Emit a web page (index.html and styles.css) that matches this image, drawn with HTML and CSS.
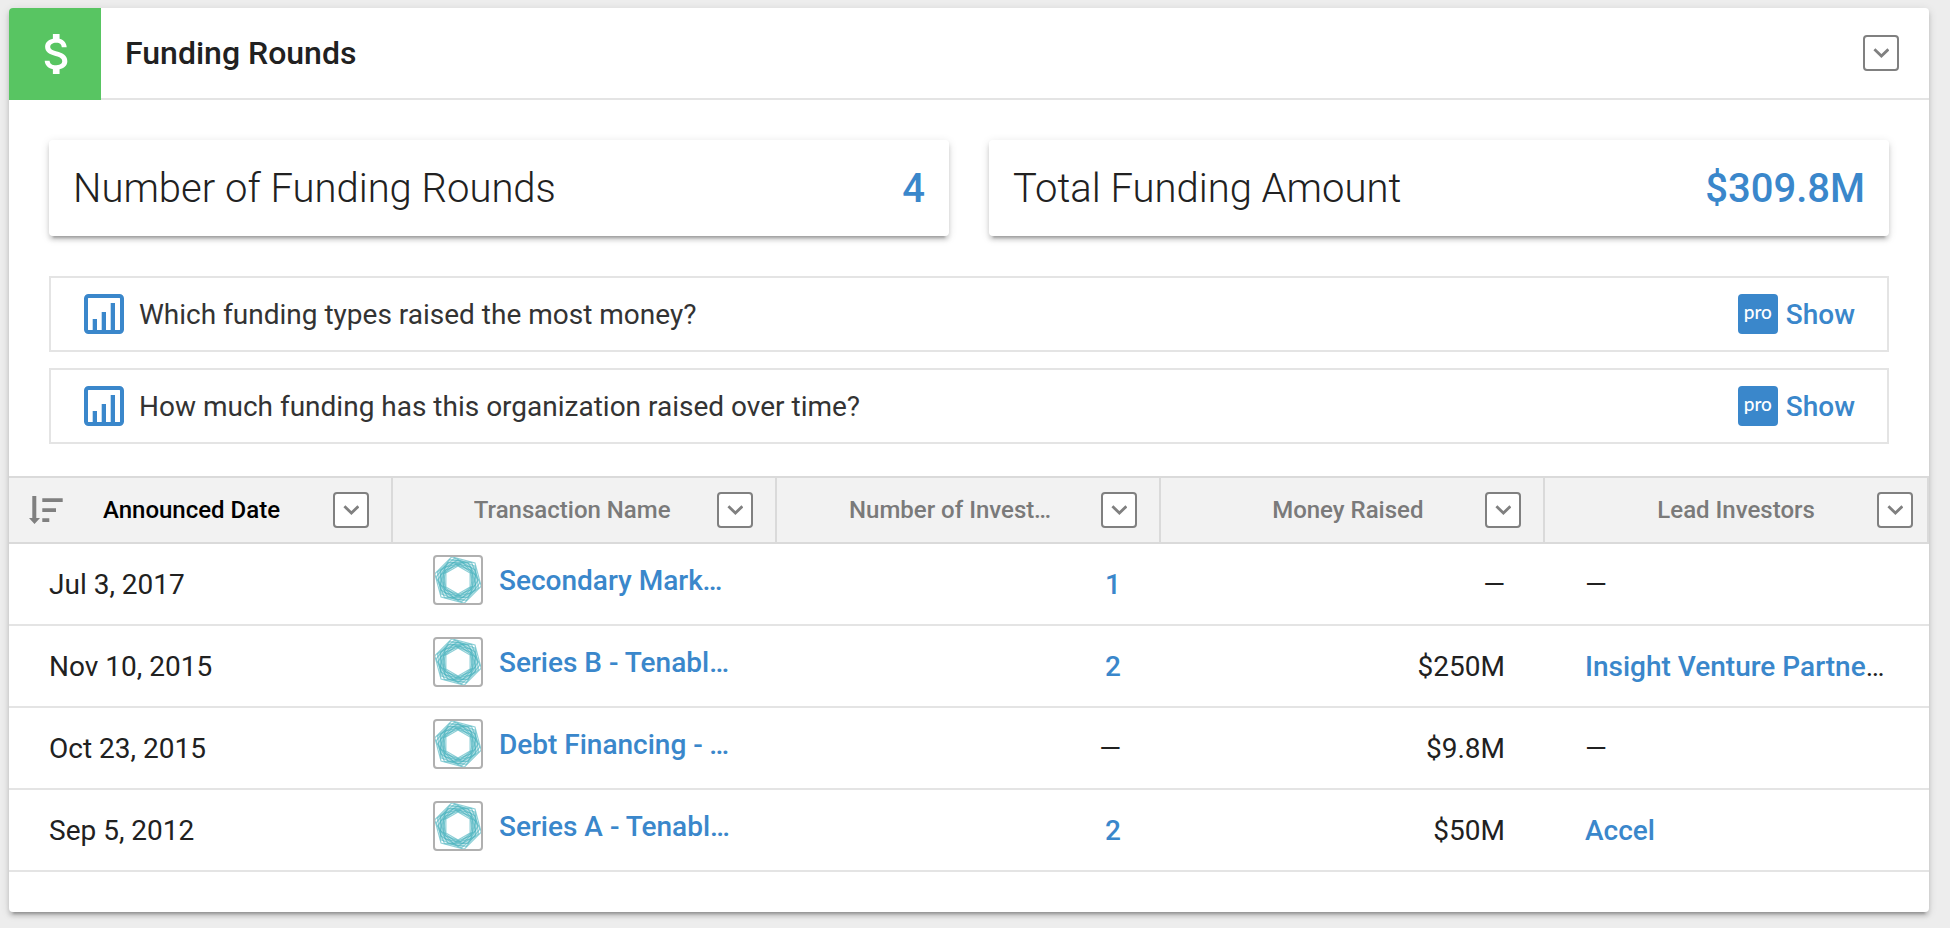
FILE: index.html
```html
<!DOCTYPE html>
<html lang="en">
<head>
    <meta charset="UTF-8">
    <meta name="viewport" content="width=device-width, initial-scale=1.0">
    <title>Funding Rounds</title>
    <link rel="stylesheet" href="styles.css">
</head>
<body>

    <!-- shared icons -->
    <svg class="icon-defs" aria-hidden="true">
        <symbol id="chevron" viewBox="0 0 16 10">
            <path d="M1.4 1.3 8.4 8 15.4 1.3" fill="none" stroke="#808080" stroke-width="2.8"/>
        </symbol>
        <symbol id="chart" viewBox="0 0 40 40">
            <rect x="2" y="2" width="36" height="36" rx="2.5" fill="#fff" stroke="#3a87cb" stroke-width="4"/>
            <path d="M8.7 25h4.3v12H8.7zM17.7 18h4.3v19h-4.3zM26.7 9h4.3v28h-4.3z" fill="#3a87cb"/>
        </symbol>
        <symbol id="logo" viewBox="-23 -23 46 46">
            <polygon points="18,0 9,15.6 -9,15.6 -18,0 -9,-15.6 9,-15.6" transform="rotate(22)" fill="none" stroke="#45b1bd" stroke-width="6" stroke-opacity="0.3"/>
            <g fill="none" stroke="#45b1bd" stroke-width="1.2" stroke-opacity="0.6">
                <polygon points="24,0 12,20.8 -12,20.8 -24,0 -12,-20.8 12,-20.8" transform="rotate(15)"/>
                <polygon points="22,0 11,19.1 -11,19.1 -22,0 -11,-19.1 11,-19.1" transform="rotate(21)"/>
                <polygon points="22,0 11,19.1 -11,19.1 -22,0 -11,-19.1 11,-19.1" transform="rotate(8)"/>
                <polygon points="20,0 10,17.3 -10,17.3 -20,0 -10,-17.3 10,-17.3" transform="rotate(0)"/>
                <polygon points="20,0 10,17.3 -10,17.3 -20,0 -10,-17.3 10,-17.3" transform="rotate(30)"/>
                <polygon points="18,0 9,15.6 -9,15.6 -18,0 -9,-15.6 9,-15.6" transform="rotate(45)"/>
                <polygon points="18,0 9,15.6 -9,15.6 -18,0 -9,-15.6 9,-15.6" transform="rotate(15)"/>
                <polygon points="16,0 8,13.9 -8,13.9 -16,0 -8,-13.9 8,-13.9" transform="rotate(38)"/>
                <polygon points="16,0 8,13.9 -8,13.9 -16,0 -8,-13.9 8,-13.9" transform="rotate(22)"/>
                <polygon points="14,0 7,12.1 -7,12.1 -14,0 -7,-12.1 7,-12.1" transform="rotate(30)"/>
            </g>
        </symbol>
    </svg>

    <section class="card">
        <header class="card-header">
            <div class="card-icon">
                <svg width="26" height="40" viewBox="5.1 3 11.7 18" aria-hidden="true">
                    <path fill="#fff" d="M11.8 10.9c-2.27-.59-3-1.2-3-2.15 0-1.09 1.01-1.85 2.7-1.85 1.78 0 2.44.85 2.5 2.1h2.21c-.07-1.72-1.12-3.3-3.21-3.81V3h-3v2.16c-1.94.42-3.5 1.68-3.5 3.61 0 2.31 1.91 3.46 4.7 4.13 2.5.6 3 1.48 3 2.41 0 .69-.49 1.79-2.7 1.79-2.06 0-2.87-.92-2.98-2.1h-2.2c.12 2.19 1.76 3.42 3.68 3.83V21h3v-2.15c1.95-.37 3.5-1.5 3.5-3.55 0-2.84-2.43-3.81-4.7-4.4z"/>
                </svg>
            </div>
            <div class="card-title">
                <h2>Funding Rounds</h2>
                <button type="button" class="menu-btn" aria-label="Section options"><svg><use href="#chevron"/></svg></button>
            </div>
        </header>

        <div class="card-body">
            <div class="stats">
                <div class="stat">
                    <span>Number of Funding Rounds</span>
                    <a href="#rounds">4</a>
                </div>
                <div class="stat">
                    <span>Total Funding Amount</span>
                    <a href="#rounds">$309.8M</a>
                </div>
            </div>

            <div class="question">
                <svg class="chart-icon" aria-hidden="true"><use href="#chart"/></svg>
                <span class="question-text">Which funding types raised the most money?</span>
                <button type="button" class="show-btn"><span class="pro">pro</span><span class="show-label">Show</span></button>
            </div>
            <div class="question">
                <svg class="chart-icon" aria-hidden="true"><use href="#chart"/></svg>
                <span class="question-text">How much funding has this organization raised over time?</span>
                <button type="button" class="show-btn"><span class="pro">pro</span><span class="show-label">Show</span></button>
            </div>
        </div>

        <table id="rounds">
            <thead>
                <tr>
                    <th class="sorted">
                        <div class="th-inner">
                            <svg class="sort-icon" viewBox="0 0 34 28" aria-hidden="true">
                                <path fill="#808080" d="M3.3 0h4v22H11l-5.5 6L0 22h3.3zM13.3 2.3h20.4V6H13.3zM13.3 12.3H27V16H13.3zM13.3 22.3h7V26h-7z"/>
                            </svg>
                            <span class="th-label">Announced Date</span>
                            <button type="button" class="menu-btn" aria-label="Announced Date options"><svg><use href="#chevron"/></svg></button>
                        </div>
                    </th>
                    <th>
                        <div class="th-inner">
                            <span class="th-label">Transaction Name</span>
                            <button type="button" class="menu-btn" aria-label="Transaction Name options"><svg><use href="#chevron"/></svg></button>
                        </div>
                    </th>
                    <th>
                        <div class="th-inner">
                            <span class="th-label">Number of Investors</span>
                            <button type="button" class="menu-btn" aria-label="Number of Investors options"><svg><use href="#chevron"/></svg></button>
                        </div>
                    </th>
                    <th>
                        <div class="th-inner">
                            <span class="th-label">Money Raised</span>
                            <button type="button" class="menu-btn" aria-label="Money Raised options"><svg><use href="#chevron"/></svg></button>
                        </div>
                    </th>
                    <th>
                        <div class="th-inner">
                            <span class="th-label">Lead Investors</span>
                            <button type="button" class="menu-btn" aria-label="Lead Investors options"><svg><use href="#chevron"/></svg></button>
                        </div>
                    </th>
                </tr>
            </thead>
            <tbody>
                <tr>
                    <td>Jul 3, 2017</td>
                    <td class="name"><a href="#"><svg class="logo"><use href="#logo"/></svg><span>Secondary Market - Tenable</span></a></td>
                    <td class="num"><a href="#">1</a></td>
                    <td class="num">—</td>
                    <td>—</td>
                </tr>
                <tr>
                    <td>Nov 10, 2015</td>
                    <td class="name"><a href="#"><svg class="logo"><use href="#logo"/></svg><span>Series B - Tenable Network Security</span></a></td>
                    <td class="num"><a href="#">2</a></td>
                    <td class="num">$250M</td>
                    <td><a href="#">Insight Venture Partners</a></td>
                </tr>
                <tr>
                    <td>Oct 23, 2015</td>
                    <td class="name"><a href="#"><svg class="logo"><use href="#logo"/></svg><span>Debt Financing - Tenable</span></a></td>
                    <td class="num">—</td>
                    <td class="num">$9.8M</td>
                    <td>—</td>
                </tr>
                <tr>
                    <td>Sep 5, 2012</td>
                    <td class="name"><a href="#"><svg class="logo"><use href="#logo"/></svg><span>Series A - Tenable Network Security</span></a></td>
                    <td class="num"><a href="#">2</a></td>
                    <td class="num">$50M</td>
                    <td><a href="#">Accel</a></td>
                </tr>
            </tbody>
        </table>
    </section>

</body>
</html>
```
FILE: styles.css
```css
* {
    box-sizing: border-box;
}

body {
    margin: 0;
    padding: 8px 21px 16px 9px;
    background-color: #ededed;
    color: #212121;
    font-family: Roboto, "Liberation Sans", sans-serif;
    font-size: 28px;
    line-height: 40px;
}

a {
    color: #3a87cb;
    font-weight: 500;
    text-decoration: none;
}

button {
    font-family: inherit;
    cursor: pointer;
}

.icon-defs {
    display: none;
}

.card {
    background-color: #fff;
    border-radius: 4px;
    padding-bottom: 40px;
    box-shadow: 0 6px 2px -4px rgba(0, 0, 0, 0.2), 0 4px 4px 0 rgba(0, 0, 0, 0.14), 0 2px 10px 0 rgba(0, 0, 0, 0.12);
}

/* header */
.card-header {
    display: flex;
    height: 92px;
}

.card-icon {
    display: flex;
    align-items: center;
    justify-content: center;
    width: 92px;
    border-top-left-radius: 4px;
    background-color: #58c562;
}

.card-title {
    display: flex;
    flex: 1;
    align-items: center;
    justify-content: space-between;
    padding: 0 30px 0 24px;
    border-bottom: 2px solid #e4e4e4;
}

.card-title h2 {
    margin: 0;
    font-size: 32px;
    font-weight: 500;
}

.menu-btn {
    display: flex;
    align-items: center;
    justify-content: center;
    flex: none;
    width: 36px;
    height: 36px;
    padding: 0;
    border: 2px solid #808080;
    border-radius: 4px;
    background-color: #fff;
}

.menu-btn svg {
    width: 16px;
    height: 10px;
}

/* stats and questions */
.card-body {
    padding: 40px 40px 32px;
}

.stats {
    display: grid;
    grid-template-columns: 1fr 1fr;
    gap: 40px;
    margin-bottom: 40px;
}

.stat {
    display: flex;
    align-items: center;
    justify-content: space-between;
    height: 96px;
    padding: 2px 24px 0;
    border-radius: 4px;
    font-size: 40px;
    font-weight: 300;
    box-shadow: 0 6px 2px -4px rgba(0, 0, 0, 0.2), 0 4px 4px 0 rgba(0, 0, 0, 0.14), 0 2px 10px 0 rgba(0, 0, 0, 0.12);
}

.question {
    display: flex;
    align-items: center;
    height: 76px;
    padding: 0 32px 0 33px;
    border: 2px solid #e4e4e4;
    color: #333;
}

.question + .question {
    margin-top: 16px;
}

.chart-icon {
    width: 40px;
    height: 40px;
}

.question-text {
    flex: 1;
    padding: 2px 0 0 15px;
}

.show-btn {
    display: flex;
    align-items: center;
    gap: 8px;
    padding: 0;
    border: none;
    background: none;
    color: #3a87cb;
    font-size: 28px;
    font-weight: 500;
    line-height: 40px;
}

.show-label {
    padding-top: 2px;
}

.pro {
    width: 40px;
    height: 40px;
    border-radius: 4px;
    background-color: #3a87cb;
    color: #fff;
    font-family: Lato, sans-serif;
    font-size: 19px;
    font-weight: 500;
    line-height: 36px;
    text-align: center;
}

/* table */
table {
    width: 100%;
    table-layout: fixed;
    border-collapse: separate;
    border-spacing: 0;
}

th {
    padding: 0;
    border: 2px solid #dadada;
    border-left: none;
    background-color: #f2f2f2;
    color: #7a7a7a;
    font-size: 24px;
    font-weight: 500;
}

.th-inner {
    position: relative;
    display: flex;
    align-items: center;
    height: 64px;
    padding: 0 22px 0 72px;
}

.th-inner::before {
    content: "";
    flex: 2 0 0;
}

th:last-child .th-inner {
    padding-right: 14px;
}

th.sorted {
    color: #000;
}

.sort-icon {
    position: absolute;
    left: 20px;
    width: 34px;
    height: 28px;
}

.th-label {
    min-width: 0;
    overflow: hidden;
    text-overflow: ellipsis;
    white-space: nowrap;
}

.th-inner::after {
    content: "";
    flex: 1 0 0;
    margin-right: 42px;
}

.th-inner .menu-btn {
    order: 1;
}

td {
    height: 82px;
    padding: 2px 40px 0;
    border-bottom: 2px solid #e4e4e4;
    overflow: hidden;
    text-overflow: ellipsis;
    white-space: nowrap;
}

td.num {
    text-align: right;
}

td.name {
    padding: 0 40px 8px;
}

td.name a {
    display: flex;
    align-items: center;
    gap: 16px;
}

td.name span {
    padding-top: 2px;
    overflow: hidden;
    text-overflow: ellipsis;
}

.logo {
    flex: none;
    width: 50px;
    height: 50px;
    border: 2px solid #b0b0b0;
    border-radius: 4px;
}
```
